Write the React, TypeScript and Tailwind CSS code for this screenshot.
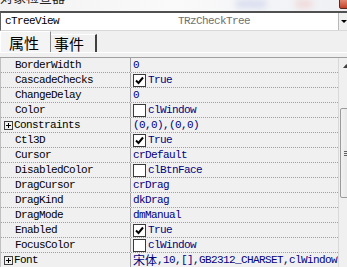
import React from 'react';

type Row = { name: string; value: string; cjk?: string; box?: 'on' | 'off'; plus?: boolean };

const rows: Row[] = [
  { name: 'BorderWidth', value: '0' },
  { name: 'CascadeChecks', value: 'True', box: 'on' },
  { name: 'ChangeDelay', value: '0' },
  { name: 'Color', value: 'clWindow', box: 'off' },
  { name: 'Constraints', value: '(0,0),(0,0)', plus: true },
  { name: 'Ctl3D', value: 'True', box: 'on' },
  { name: 'Cursor', value: 'crDefault' },
  { name: 'DisabledColor', value: 'clBtnFace', box: 'off' },
  { name: 'DragCursor', value: 'crDrag' },
  { name: 'DragKind', value: 'dkDrag' },
  { name: 'DragMode', value: 'dmManual' },
  { name: 'Enabled', value: 'True', box: 'on' },
  { name: 'FocusColor', value: 'clWindow', box: 'off' },
  { name: 'Font', cjk: '宋体', value: ',10,[],GB2312_CHARSET,clWindowText', plus: true },
];

const mono = "font-['Liberation_Mono','Noto_Sans_CJK_SC',monospace] text-[11px] tracking-[-0.6px]";

const CheckBox = ({ on }: { on: boolean }) => (
  <span className="w-[13px] h-[13px] shrink-0 border border-[#3a3a3a] bg-white flex items-center justify-center mr-[2px]">
    {on && (
      <svg width="9" height="9" viewBox="0 0 9 9">
        <path d="M1 4.5 L3.5 7 L8 1.5" stroke="#000" strokeWidth="2" fill="none" />
      </svg>
    )}
  </span>
);

const PropRow = ({ row }: { row: Row }) => (
  <div className="flex h-[15px] border-b border-dotted border-[#a0a0a0]">
    <div className="w-[130px] shrink-0 flex items-center border-r border-[#a0a0a0] text-black">
      {row.plus ? (
        <>
          <span className="ml-[3px] w-[9px] h-[9px] border border-[#404040] flex items-center justify-center mr-[1px]">
            <svg width="7" height="7" viewBox="0 0 7 7">
              <path d="M1 3.5 H6 M3.5 1 V6" stroke="#000" strokeWidth="1" />
            </svg>
          </span>
          <span className={mono}>{row.name}</span>
        </>
      ) : (
        <span className={`ml-[14px] ${mono}`}>{row.name}</span>
      )}
    </div>
    <div className="flex-1 min-w-0 flex items-center pl-[2px] text-[#000080] overflow-hidden whitespace-nowrap">
      {row.box && <CheckBox on={row.box === 'on'} />}
      {row.cjk && (
        <span className="font-['Noto_Sans_CJK_SC',sans-serif] text-[12px] leading-none">{row.cjk}</span>
      )}
      <span className={mono}>{row.value}</span>
    </div>
  </div>
);

export default function App() {
  return (
    <div className="w-[347px] h-[267px] overflow-hidden bg-[#f0f0f0] relative">
      {/* title bar, mostly cut off */}
      <div className="h-[11px] overflow-hidden bg-gradient-to-r from-[#f2f2f2] via-[#fafafa] to-[#eef0f4] relative">
        <div className="mt-[-11px] text-[13px] leading-[16px] text-[#222] font-['Noto_Sans_CJK_SC',sans-serif]">
          对象检查器
        </div>
        <div className="absolute left-[236px] top-0 w-[30px] h-[8px] bg-[#d8dcef] blur-[3px]" />
        <div className="absolute left-[296px] top-0 w-[16px] h-[8px] bg-[#f0d8d8] blur-[3px]" />
        <div className="absolute left-[339px] top-[-2px] w-[12px] h-[11px] rounded-[2px] border border-[#5a2a20] bg-gradient-to-b from-[#e8907a] to-[#c0402a]" />
      </div>

      {/* component combobox */}
      <div className="h-[20px] flex border-t-2 border-t-[#505050] border-l border-l-[#606060] border-b border-b-[#d8d8d8] bg-white">
        <div className={`w-[172px] pl-[4px] flex items-center text-black ${mono}`}>cTreeView</div>
        <div className={`flex-1 flex items-center pl-[5px] text-[#707070] ${mono}`}>TRzCheckTree</div>
        <div className="w-[9px] flex items-center justify-end bg-[#f0f0f0] border-l border-[#b8b8b8]">
          <svg width="6" height="4" viewBox="0 0 6 4">
            <path d="M0 0 H6 L3 3 Z" fill="#000" />
          </svg>
        </div>
      </div>

      {/* tabs */}
      <div className="h-[22px] flex items-end border-b border-white">
        <div className="w-[51px] h-[21px] flex items-center pl-[8px] bg-[#f4f4f4] border-t border-l border-white border-r border-r-[#8a8a8a] text-[15px] leading-none text-black font-['Noto_Sans_CJK_SC',sans-serif]">
          属性
        </div>
        <div className="w-[46px] h-[18px] flex items-center pl-[3px] border-t border-white border-r-2 border-r-[#404040] text-[15px] leading-none text-black font-['Noto_Sans_CJK_SC',sans-serif]">
          事件
        </div>
      </div>

      <div className="h-[4px]" />

      {/* grid + scrollbar */}
      <div className="flex w-[355px] border-t border-[#a0a0a0]">
        <div className="w-[338px] shrink-0 border-l border-[#c0c0c0]">
          {rows.map((r) => (
            <PropRow key={r.name} row={r} />
          ))}
        </div>
        <div className="w-[17px] shrink-0 bg-[#f0f0f0] border-l border-[#d8d8d8] flex flex-col">
          <div className="h-[16px] flex items-center pl-[4px]">
            <svg width="7" height="4" viewBox="0 0 7 4">
              <path d="M0 4 L3.5 0 L7 4 Z" fill="#404040" />
            </svg>
          </div>
          <div className="h-[34px]" />
          <div className="h-[90px] ml-[1px] border border-[#9a9a9a] rounded-[2px] bg-gradient-to-r from-[#f2f2f2] to-[#dcdcdc] flex items-center pl-[3px]">
            <div className="flex flex-col gap-[1px]">
              <div className="w-[6px] h-[1px] bg-[#606060]" />
              <div className="w-[6px] h-[1px] bg-[#606060]" />
              <div className="w-[6px] h-[1px] bg-[#606060]" />
            </div>
          </div>
        </div>
      </div>
    </div>
  );
}
